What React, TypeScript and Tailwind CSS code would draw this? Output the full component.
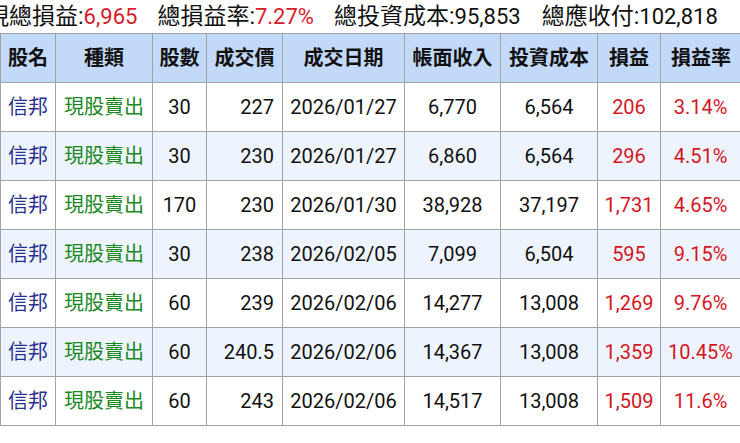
import React from "react";

const rows = [
  ["30", "227", "2026/01/27", "6,770", "6,564", "206", "3.14%"],
  ["30", "230", "2026/01/27", "6,860", "6,564", "296", "4.51%"],
  ["170", "230", "2026/01/30", "38,928", "37,197", "1,731", "4.65%"],
  ["30", "238", "2026/02/05", "7,099", "6,504", "595", "9.15%"],
  ["60", "239", "2026/02/06", "14,277", "13,008", "1,269", "9.76%"],
  ["60", "240.5", "2026/02/06", "14,367", "13,008", "1,359", "10.45%"],
  ["60", "243", "2026/02/06", "14,517", "13,008", "1,509", "11.6%"],
];

const headers = ["股名", "種類", "股數", "成交價", "成交日期", "帳面收入", "投資成本", "損益", "損益率"];

export default function App() {
  return (
    <div className="w-[740px] h-[443px] overflow-hidden bg-white font-['Roboto','Noto_Sans_CJK_TC',sans-serif] text-[#111]">
      <div className="ml-[-14px] h-[33px] flex items-center whitespace-nowrap text-[22px] leading-[32px]">
        <span className="text-[23px]">現總損益:</span>
        <span className="text-[#d81b2a]">6,965</span>
        <span className="ml-[20px] text-[23px]">總損益率:</span>
        <span className="text-[#d81b2a]">7.27%</span>
        <span className="ml-[20px] text-[23px]">總投資成本:</span>
        <span>95,853</span>
        <span className="ml-[21px] text-[23px]">總應收付:</span>
        <span>102,818</span>
      </div>
      <table className="table-fixed border-collapse w-[741px]">
        <colgroup>
          <col className="w-[55px]" />
          <col className="w-[97px]" />
          <col className="w-[54px]" />
          <col className="w-[76px]" />
          <col className="w-[122px]" />
          <col className="w-[96px]" />
          <col className="w-[97px]" />
          <col className="w-[63px]" />
          <col className="w-[81px]" />
        </colgroup>
        <thead>
          <tr className="h-[49px] bg-[#c3d9f9]">
            {headers.map((h) => (
              <th key={h} className="border border-[#a3a3a3] p-0 text-center text-[20px] font-bold">
                {h}
              </th>
            ))}
          </tr>
        </thead>
        <tbody className="text-[20px]">
          {rows.map((r, i) => (
            <tr key={i} className={i % 2 === 1 ? "h-[49px] bg-[#eef4fd]" : "h-[49px] bg-white"}>
              <td className="border border-[#a3a3a3] p-0 text-center text-[#27308f]">信邦</td>
              <td className="border border-[#a3a3a3] p-0 text-center text-[#1b891f]">現股賣出</td>
              <td className="border border-[#a3a3a3] p-0 text-center">{r[0]}</td>
              <td className="border border-[#a3a3a3] p-0 pr-[8px] text-right">{r[1]}</td>
              <td className="border border-[#a3a3a3] p-0 text-center">{r[2]}</td>
              <td className="border border-[#a3a3a3] p-0 text-center">{r[3]}</td>
              <td className="border border-[#a3a3a3] p-0 text-center">{r[4]}</td>
              <td className="border border-[#a3a3a3] p-0 text-center text-[#d5161f]">{r[5]}</td>
              <td className="border border-[#a3a3a3] p-0 pr-[1px] text-center text-[#d5161f]">{r[6]}</td>
            </tr>
          ))}
        </tbody>
      </table>
    </div>
  );
}
